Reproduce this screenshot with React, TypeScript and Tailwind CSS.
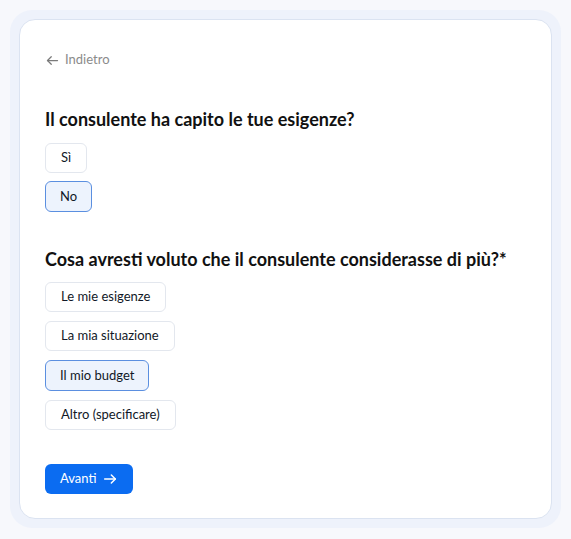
import React, { useState } from "react";

function ArrowLeft({ className }: { className?: string }) {
  return (
    <svg viewBox="0 0 24 24" className={className} fill="none" stroke="currentColor" strokeWidth={2} strokeLinecap="round" strokeLinejoin="round">
      <path d="M20 12H4" />
      <path d="M10 6l-6 6 6 6" />
    </svg>
  );
}

function ArrowRight({ className }: { className?: string }) {
  return (
    <svg viewBox="0 0 24 24" className={className} fill="none" stroke="currentColor" strokeWidth={2.2} strokeLinecap="round" strokeLinejoin="round">
      <path d="M4 12h16" />
      <path d="M14 6l6 6-6 6" />
    </svg>
  );
}

function Option({ label, selected, onClick }: { label: string; selected: boolean; onClick: () => void }) {
  return (
    <button
      onClick={onClick}
      className={
        selected
          ? "h-[31px] px-[14px] rounded-[6px] border-[1.5px] border-[#5b8fe0] bg-[#edf3fd] text-[13px] text-[#111827] self-start"
          : "h-[30px] px-[15px] rounded-[6px] border border-[#e3e7ee] bg-white text-[13px] text-[#111827] self-start"
      }
    >
      {label}
    </button>
  );
}

export default function App() {
  const [q1, setQ1] = useState("No");
  const [q2, setQ2] = useState("Il mio budget");
  const opts1 = ["Sì", "No"];
  const opts2 = ["Le mie esigenze", "La mia situazione", "Il mio budget", "Altro (specificare)"];
  return (
    <div className="min-h-[539px] bg-[#f7f8fc] p-[10px]" style={{ fontFamily: "Lato, 'Noto Sans', sans-serif" }}>
      <div className="rounded-[22px] bg-[#eef2fb] p-[9px]">
        <div className="h-[500px] rounded-[16px] border border-[#dbe3f1] bg-white px-[25px] pt-[30px]">
          <button className="flex items-center gap-[5px] text-[13px] text-[#8b8b8b] h-[20px]">
            <ArrowLeft className="w-[15px] h-[15px] text-[#7a7a7a]" />
            <span>Indietro</span>
          </button>

          <h2 className="mt-[37px] text-[18px] font-bold text-[#111111] leading-[24px]">
            Il consulente ha capito le tue esigenze?
          </h2>
          <div className="mt-[12px] flex flex-col gap-[8px]">
            {opts1.map((o) => (
              <Option key={o} label={o} selected={q1 === o} onClick={() => setQ1(o)} />
            ))}
          </div>

          <h2 className="mt-[35px] text-[18px] font-bold text-[#111111] leading-[24px]">
            Cosa avresti voluto che il consulente considerasse di più?*
          </h2>
          <div className="mt-[11px] flex flex-col gap-[9px]">
            {opts2.map((o) => (
              <Option key={o} label={o} selected={q2 === o} onClick={() => setQ2(o)} />
            ))}
          </div>

          <button className="mt-[34px] h-[30px] px-[15px] rounded-[6px] bg-[#0b6cf1] text-white text-[13px] flex items-center gap-[6px]">
            <span>Avanti</span>
            <ArrowRight className="w-[16px] h-[16px]" />
          </button>
        </div>
      </div>
    </div>
  );
}
